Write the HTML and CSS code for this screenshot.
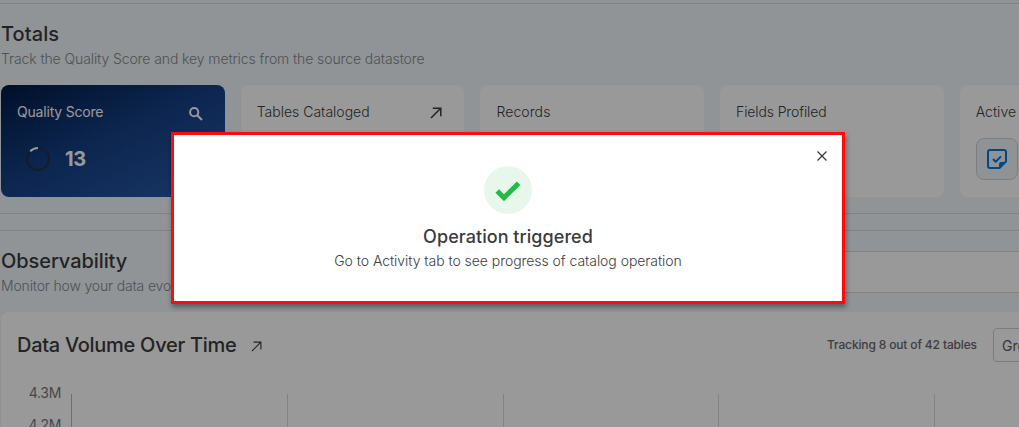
FILE: index.html
```html
<!DOCTYPE html>
<html lang="en">
<head>
<meta charset="utf-8">
<title>Datastore overview</title>
<link rel="stylesheet" href="styles.css">
</head>
<body>
<main class="page">
  <section class="totals">
    <h2 class="heading totals-heading">Totals</h2>
    <p class="subtitle totals-subtitle">Track the Quality Score and key metrics from the source datastore</p>
    <div class="cards">
      <article class="card card-score">
        <header class="card-head"><span class="label-score">Quality Score</span>
          <svg class="search" viewBox="0 0 16 16"><circle cx="6.2" cy="6.2" r="4.1"/><path d="M9.2 9.2 14 14"/></svg>
        </header>
        <div class="score">
          <svg class="ring" viewBox="0 0 24 24"><circle cx="12" cy="12" r="11"/><path d="M4.2 4.2A11 11 0 0 1 12 1"/></svg>
          <strong class="score-value">13</strong>
        </div>
      </article>
      <article class="card">
        <header class="card-head"><span class="label-tables">Tables Cataloged</span>
          <svg class="arrow" viewBox="0 0 12 12"><path d="M1 11 10.5 1.5M2.8 1.2H10.8V9.2"/></svg>
        </header>
      </article>
      <article class="card"><header class="card-head"><span class="label-records">Records</span></header></article>
      <article class="card"><header class="card-head"><span class="label-fields">Fields Profiled</span></header></article>
      <article class="card">
        <header class="card-head"><span class="label-active">Active</span></header>
        <div class="check-tile">
          <svg class="note" viewBox="0 0 24 24"><path class="note-line" d="M14.5 21H5a2 2 0 0 1-2-2V5a2 2 0 0 1 2-2h14a2 2 0 0 1 2 2v9.5L14.5 21Z"/><path class="note-fold" d="M14 21.5V17a2 2 0 0 1 2-2h5.5Z"/><path class="note-line" d="m8 12 2.7 2.7L16 9.4"/></svg>
        </div>
      </article>
    </div>
  </section>
  <section class="observability">
    <div class="obs-head">
      <div class="obs-text">
        <h2 class="heading obs-heading">Observability</h2>
        <p class="subtitle obs-subtitle">Monitor how your data evolves</p>
      </div>
      <div class="filter"></div>
    </div>
    <div class="chart-card">
      <div class="chart-head">
        <h3 class="chart-title">Data Volume Over Time</h3>
        <svg class="arrow arrow-thin" viewBox="0 0 12 12"><path d="M1 11 10.5 1.5M2.8 1.2H10.8V9.2"/></svg>
        <span class="tracking">Tracking 8 out of 42 tables</span>
        <button class="group">Group</button>
      </div>
      <div class="chart">
        <div class="axis"><span>4.3M</span><span>4.2M</span></div>
        <div class="plot"><i></i><i></i><i></i><i></i><i></i></div>
      </div>
    </div>
  </section>
</main>
<div class="overlay">
  <div class="dialog" role="dialog">
    <svg class="close" viewBox="0 0 10 10"><path d="M.5.5l9 9M9.5.5l-9 9"/></svg>
    <div class="success"><svg class="tick" viewBox="0 0 26 22"><path d="M2.2 11 9 17.8 23.6 3.2"/></svg></div>
    <h1 class="dialog-title">Operation triggered</h1>
    <p class="dialog-body">Go to Activity tab to see progress of catalog operation</p>
  </div>
</div>
</body>
</html>
```
FILE: styles.css
```css
* { box-sizing: border-box; margin: 0; padding: 0; }
body { width: 1019px; height: 427px; overflow: hidden; background: #f0f7fc; color: #3b3b3d; font: 14px/20px Inter, "Noto Sans", sans-serif; }
span, h1, h2, h3, p, button { white-space: nowrap; }
svg { fill: none; stroke: currentColor; flex: none; }
.page { height: 427px; overflow: hidden; padding-top: 3px; }
.totals { height: 211px; border-top: 1px solid #d5dade; border-bottom: 1px solid #d5dade; padding: 16px 0 0 1px; }
.heading { font-size: 20px; line-height: 28px; font-weight: 500; }
.totals-heading { letter-spacing: .1px; }
.obs-heading { letter-spacing: -.08px; }
.subtitle { font-weight: 300; color: #85888b; line-height: 20px; margin-top: 1px; }
.totals-subtitle { letter-spacing: -.1px; }
.obs-subtitle { letter-spacing: -.16px; }
.cards { display: grid; grid-template-columns: repeat(5, 223.7px); gap: 16px; margin-top: 16px; }
.card { height: 112px; border-radius: 8px; background: #fff; padding: 17px 16px; font-weight: 300; }
.card-head { display: flex; justify-content: space-between; align-items: center; height: 20px; padding-right: 6px; }
.card-score { background: linear-gradient(155deg, #001a44 0%, #143f83 45%, #2b5cac 100%); color: #fff; }
.label-score { font-weight: 400; letter-spacing: -.2px; }
.label-records { letter-spacing: .1px; }
.label-fields { letter-spacing: -.12px; }
.search { width: 16px; height: 16px; stroke-width: 2; margin: 3px -1px 0 0; }
.arrow { width: 12px; height: 12px; stroke-width: 1.5; margin-top: 2px; }
.score { display: flex; align-items: center; gap: 15px; padding-left: 9px; margin-top: 25px; height: 24px; }
.ring { width: 24px; height: 24px; stroke-width: 2; }
.ring circle { stroke: #262f48; }
.score-value { font-size: 20px; line-height: 24px; font-weight: 700; letter-spacing: -.4px; }
.check-tile { display: flex; align-items: center; justify-content: center; width: 42px; height: 42px; margin-top: 16px; border: 1px solid #ced3d8; border-radius: 8px; background: #eff5fa; color: #007be5; }
.note { width: 24px; height: 24px; }
.note-line { stroke-width: 2; stroke-linejoin: round; }
.note-fold { fill: currentColor; stroke: none; }
.observability { margin-top: 16px; border-top: 1px solid #d5dade; padding-left: 1px; }
.obs-head { display: flex; justify-content: space-between; padding-top: 16px; height: 81px; }
.filter { width: 400px; height: 42px; margin-top: 4px; border: 1px solid #d8d8d8; border-right: 0; background: #fff; }
.chart-card { height: 140px; width: 1030px; border-radius: 8px 0 0; background: #fff; padding: 16px; }
.chart-head { display: flex; align-items: center; height: 34px; }
.chart-title { font-size: 20px; line-height: 28px; font-weight: 500; width: 234px; letter-spacing: -.28px; }
.arrow-thin { width: 11px; height: 11px; stroke-width: 1.2; margin-top: 3px; }
.tracking { margin-left: auto; width: 150px; font-size: 12px; font-weight: 500; letter-spacing: -.15px; color: #67676a; }
.group { margin-left: 16px; width: 60px; height: 34px; margin-right: -38px; padding-left: 8px; border: 1px solid #cfcfcf; border-radius: 4px; background: #fff; text-align: left; font: 400 14px Inter, sans-serif; color: #5c5c5e; overflow: hidden; }
.chart { display: flex; margin-top: 22px; }
.axis { flex: none; width: 54px; padding-right: 10px; display: grid; grid-auto-rows: 32px; justify-items: end; color: #77777a; line-height: 20px; letter-spacing: -.3px; margin-top: -1px; }
.plot { flex: none; display: grid; grid-template-columns: repeat(5, 215.8px); margin-top: 10px; height: 60px; }
.plot i { border-left: 1px solid #d9d9d9; }
.plot i:first-child { border-color: #b8b8b8; }
.overlay { position: absolute; inset: 0; background: rgba(0, 0, 0, .4); padding: 132px 0 0 171px; overflow: hidden; }
.dialog { position: relative; display: flex; flex-direction: column; align-items: center; width: 674px; height: 172px; border: 3px solid #fe0b0b; background: #fff; padding-top: 31px; box-shadow: 1px 3px 5px rgba(0, 0, 0, .4); }
.close { position: absolute; right: 15px; top: 16px; width: 10px; height: 10px; stroke-width: 1.3; }
.success { display: grid; place-items: center; width: 48px; height: 48px; border-radius: 50%; background: #e8f7ec; color: #22bb46; }
.tick { width: 26px; height: 22px; stroke-width: 5; margin-top: 2px; }
.dialog-title { font-size: 18px; line-height: 26px; font-weight: 500; letter-spacing: .05px; margin-top: 10px; }
.dialog-body { line-height: 20px; font-weight: 350; letter-spacing: -.05px; margin-top: 1px; }
```
